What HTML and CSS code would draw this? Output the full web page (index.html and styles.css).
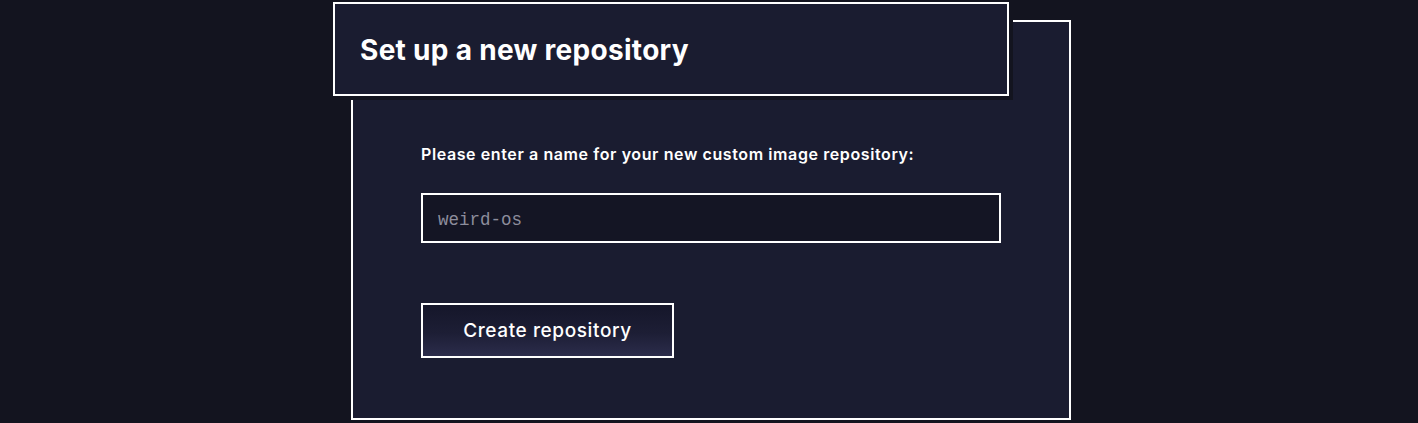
FILE: index.html
```html
<!DOCTYPE html>
<html lang="en">
<head>
<meta charset="utf-8">
<title>Set up a new repository</title>
<link rel="stylesheet" href="styles.css">
</head>
<body>
<main class="page">
  <section class="card">
    <header class="card-title">
      <h1>Set up a new repository</h1>
    </header>
    <form class="card-body">
      <label class="field-label" for="repo">Please enter a name for your new custom image repository:</label>
      <input class="field-input" id="repo" type="text" placeholder="weird-os">
      <button class="btn" type="button">Create repository</button>
    </form>
  </section>
</main>
</body>
</html>
```
FILE: styles.css
```css
html, body {
  margin: 0;
  padding: 0;
  background: #13141f;
  height: 100%;
}
body {
  font-family: "Inter", "Noto Sans", sans-serif;
  color: #ffffff;
}
.page {
  display: flex;
  justify-content: center;
  padding-top: 20px;
  padding-left: 4px;
}
.card {
  width: 716px;
  height: 396px;
  border: 2px solid #ffffff;
  background: #1a1c30;
  display: flex;
  flex-direction: column;
}
.card-title {
  margin: -20px 0 0 -20px;
  height: 90px;
  width: 647px;
  padding-left: 25px;
  box-sizing: content-box;
  border: 2px solid #ffffff;
  background: #1a1c30;
  box-shadow: 0 0 0 4px #13141f;
  display: flex;
  align-items: center;
}
.card-title h1 {
  margin: 0;
  font-size: 28px;
  font-weight: 700;
  letter-spacing: 0.3px;
  line-height: 1;
  padding-top: 1px;
}
.card-body {
  display: flex;
  flex-direction: column;
  align-items: flex-start;
  padding: 48px 0 0 68px;
}
.field-label {
  font-size: 16px;
  font-weight: 600;
  line-height: 20px;
  letter-spacing: 0.6px;
}
.field-input {
  margin-top: 29px;
  width: 576px;
  height: 43px;
  box-sizing: content-box;
  padding: 3px 0 0 0;
  text-indent: 15px;
  border: 2px solid #ffffff;
  background: #141524;
  color: #ffffff;
  font-family: "Liberation Mono", "DejaVu Sans Mono", monospace;
  font-size: 17.5px;
  outline: none;
}
.field-input::placeholder {
  color: #8d8d9c;
}
.btn {
  margin-top: 60px;
  width: 253px;
  height: 55px;
  border: 2px solid #ffffff;
  background: linear-gradient(180deg, #15162a 0%, #1d1e35 55%, #2b2c4b 100%);
  color: #ffffff;
  font-family: "Inter", "Noto Sans", sans-serif;
  font-size: 19px;
  font-weight: 500;
  letter-spacing: 0.6px;
  padding: 0;
  cursor: pointer;
}
```
